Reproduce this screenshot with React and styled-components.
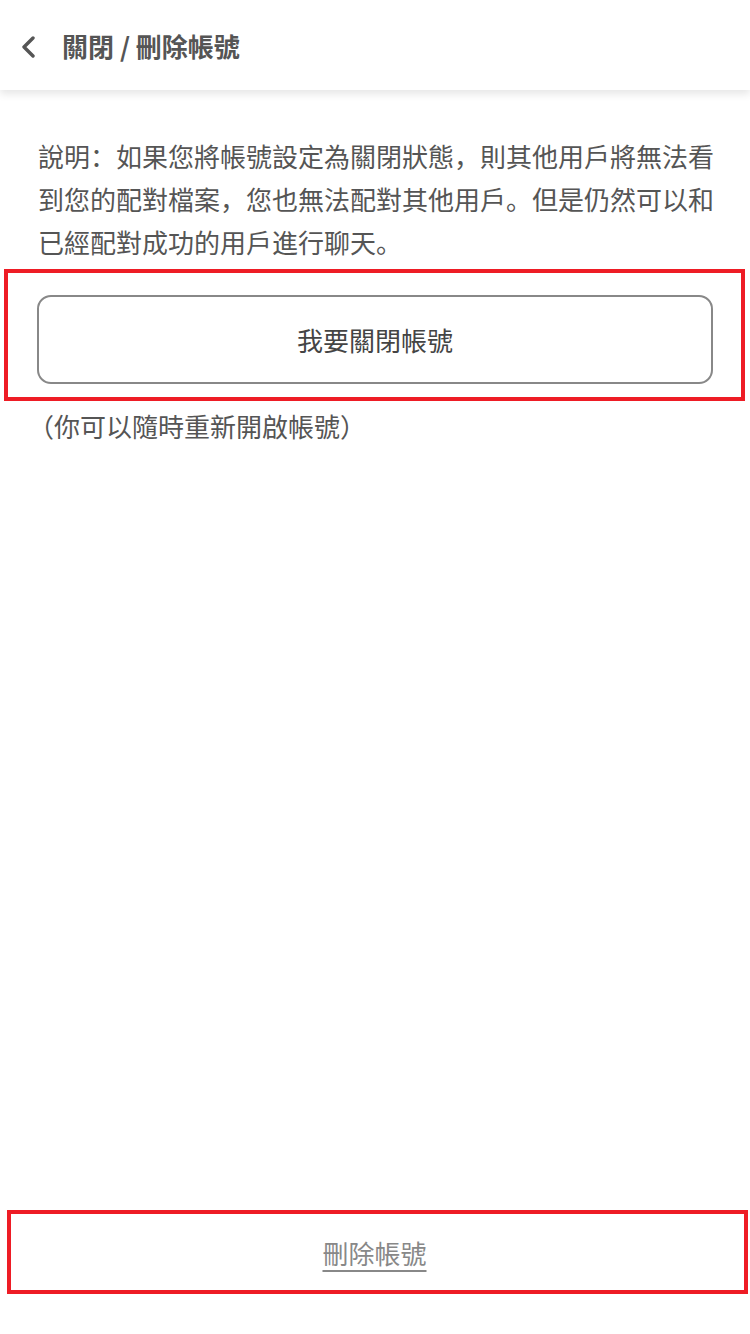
import React from 'react';
import styled, { createGlobalStyle } from 'styled-components';

const COLORS = {
  white: '#FFFFFF',
  text: '#555555',
  textDark: '#444444',
  muted: '#888888',
  border: '#888888',
  mark: '#EE1C25',
};

const FONT = `'Noto Sans CJK SC', 'Noto Sans', sans-serif`;

const GlobalStyle = createGlobalStyle`
  html, body { margin: 0; padding: 0; background: ${COLORS.white}; }
  body { font-family: ${FONT}; -webkit-font-smoothing: antialiased; }
  * { box-sizing: border-box; }
`;

/* ---------- layout ---------- */
const Page = styled.div`
  width: 750px;
  min-height: 1334px;
  display: flex;
  flex-direction: column;
  background: ${COLORS.white};
`;

const Header = styled.header`
  height: 90px;
  display: flex;
  align-items: center;
  gap: 20px;
  padding: 0 0 0 20px;
  background: ${COLORS.white};
  box-shadow: 0 4px 8px rgba(0, 0, 0, 0.1);
  position: relative;
  z-index: 1;
`;

const BackButton = styled.button`
  width: 22px;
  height: 30px;
  padding: 0;
  margin-top: 4px;
  border: none;
  background: transparent;
  display: inline-flex;
  align-items: center;
  justify-content: flex-start;
  color: ${COLORS.text};
  cursor: pointer;
`;

const Title = styled.h1`
  margin: 0;
  font-size: 26px;
  font-weight: 700;
  color: ${COLORS.text};
  letter-spacing: 0;
`;

const Content = styled.main`
  flex: 1;
  display: flex;
  flex-direction: column;
  padding-top: 44px;
`;

const Note = styled.p`
  margin: 0;
  padding: 0 36px 0 38px;
  font-size: 26px;
  line-height: 43px;
  color: ${COLORS.text};
`;

/* red annotation frame around an action */
const Highlight = styled.div`
  border: 4px solid ${COLORS.mark};
  margin: ${p => p.$margin || '0'};
  padding: ${p => p.$padding || '0'};
  height: ${p => p.$height || 'auto'};
  display: flex;
  align-items: center;
  justify-content: center;
`;

const OutlineButton = styled.button`
  width: 100%;
  height: 89px;
  border: 2px solid ${COLORS.border};
  border-radius: 14px;
  background: ${COLORS.white};
  font-family: ${FONT};
  font-size: 26px;
  color: ${COLORS.textDark};
  cursor: pointer;
`;

const Hint = styled.p`
  margin: 3px 0 0;
  padding: 0 38px 0 28px;
  font-size: 26px;
  line-height: 43px;
  color: ${COLORS.text};
`;

const Spacer = styled.div`
  flex: 1;
`;

const TextLink = styled.button`
  border: none;
  background: transparent;
  padding: 0;
  font-family: ${FONT};
  font-size: 26px;
  color: ${COLORS.muted};
  text-decoration: underline;
  text-underline-offset: 6px;
  text-decoration-thickness: 2px;
  cursor: pointer;
`;

const ChevronLeft = () => (
  <svg width="16" height="22" viewBox="0 0 16 22" fill="none" aria-hidden>
    <path d="M13 2 L4 11 L13 20" stroke="currentColor" strokeWidth="3.4" strokeLinecap="round" strokeLinejoin="round" />
  </svg>
);

const App = () => (
  <>
    <GlobalStyle />
    <Page>
      <Header>
        <BackButton aria-label="返回">
          <ChevronLeft />
        </BackButton>
        <Title>關閉 / 刪除帳號</Title>
      </Header>

      <Content>
        <Note>
          說明：如果您將帳號設定為關閉狀態，則其他用戶將無法看到您的配對檔案，您也無法配對其他用戶。但是仍然可以和已經配對成功的用戶進行聊天。
        </Note>

        <Highlight $margin="6px 5px 0 4px" $padding="22px 28px 13px 29px">
          <OutlineButton>我要關閉帳號</OutlineButton>
        </Highlight>

        <Hint>（你可以隨時重新開啟帳號）</Hint>

        <Spacer />

        <Highlight $margin="0 2px 40px 7px" $padding="0 6px 0 0" $height="84px">
          <TextLink>刪除帳號</TextLink>
        </Highlight>
      </Content>
    </Page>
  </>
);

export default App;
